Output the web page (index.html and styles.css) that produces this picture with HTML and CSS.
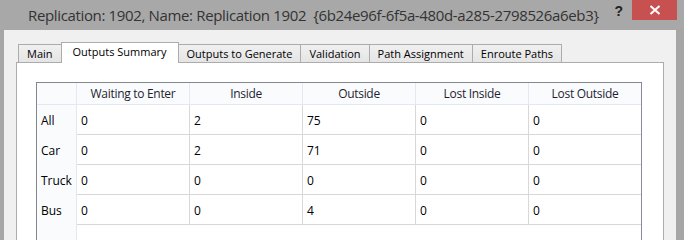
FILE: index.html
```html
<!doctype html>
<html lang="en">
  <head>
    <meta charset="UTF-8" />
    <title>Replication 1902</title>
    <link rel="stylesheet" href="styles.css">
  </head>
  <body>
    <div class="window">
      <div class="titlebar">
        <span class="title">Replication: 1902, Name: Replication 1902&nbsp;&nbsp;{6b24e96f-6f5a-480d-a285-2798526a6eb3}</span>
        <span class="help">?</span>
        <span class="close">
          <svg width="12" height="10" viewBox="0 0 12 10">
            <path d="M1.5 1 L10.5 9 M10.5 1 L1.5 9" stroke="#fff" stroke-width="2" fill="none" />
          </svg>
        </span>
      </div>

      <div class="client">
        <div class="tabs">
          <div class="tab">Main</div>
          <div class="tab active">Outputs Summary</div>
          <div class="tab">Outputs to Generate</div>
          <div class="tab">Validation</div>
          <div class="tab">Path Assignment</div>
          <div class="tab">Enroute Paths</div>
        </div>

        <div class="panel">
          <div class="grid">
            <div class="row head">
              <div class="rh"></div>
              <div class="cell">Waiting to Enter</div>
              <div class="cell">Inside</div>
              <div class="cell">Outside</div>
              <div class="cell">Lost Inside</div>
              <div class="cell">Lost Outside</div>
            </div>
            <div class="row">
              <div class="rh">All</div>
              <div class="cell">0</div>
              <div class="cell">2</div>
              <div class="cell">75</div>
              <div class="cell">0</div>
              <div class="cell">0</div>
            </div>
            <div class="row">
              <div class="rh">Car</div>
              <div class="cell">0</div>
              <div class="cell">2</div>
              <div class="cell">71</div>
              <div class="cell">0</div>
              <div class="cell">0</div>
            </div>
            <div class="row">
              <div class="rh">Truck</div>
              <div class="cell">0</div>
              <div class="cell">0</div>
              <div class="cell">0</div>
              <div class="cell">0</div>
              <div class="cell">0</div>
            </div>
            <div class="row">
              <div class="rh">Bus</div>
              <div class="cell">0</div>
              <div class="cell">0</div>
              <div class="cell">4</div>
              <div class="cell">0</div>
              <div class="cell">0</div>
            </div>
            <div class="row filler">
              <div class="rh"></div>
            </div>
          </div>
        </div>
      </div>
    </div>
  </body>
</html>
```

FILE: styles.css
```css
body {
  margin: 0;
  background: #a6a6a6;
  font-family: "Open Sans", "Noto Sans", sans-serif;
  overflow: hidden;
}
.window {
  height: 240px;
  display: flex;
  flex-direction: column;
}
.titlebar {
  height: 30px;
  display: flex;
  align-items: flex-start;
  background: #a8a8a8;
  color: #333;
}
.title {
  font-size: 15px;
  padding: 5px 0 0 28px;
  flex: 1;
  white-space: nowrap;
  letter-spacing: -0.35px;
}
.help {
  font-family: "Liberation Sans", sans-serif;
  font-weight: bold;
  font-size: 14px;
  color: #222;
  padding-top: 3px;
  margin-right: 9px;
}
.close {
  width: 45px;
  height: 20px;
  margin-right: 7px;
  background: #c75050;
  display: flex;
  align-items: center;
  justify-content: center;
}
.client {
  flex: 1;
  margin: 0 8px 0 4px;
  background: #f0f0f0;
  padding: 12px 12px 0 12px;
  display: flex;
  flex-direction: column;
}
.tabs {
  display: flex;
  align-items: flex-end;
  padding-left: 2px;
  height: 20px;
  font-size: 11px;
}
.tab {
  height: 18px;
  line-height: 17px;
  padding: 0 8px;
  border: 1px solid #acacac;
  border-bottom: none;
  border-left: none;
  background: linear-gradient(#f0f0f0, #e5e5e5);
  color: #000;
  box-sizing: border-box;
  white-space: nowrap;
}
.tab:first-child {
  border-left: 1px solid #acacac;
}
.tab.active {
  height: 21px;
  margin-bottom: -1px;
  background: #fff;
  border-left: 1px solid #acacac;
  margin-left: -1px;
  padding: 0 11px;
  position: relative;
  line-height: 18px;
}
.tab.active + .tab {
  border-left: none;
}
.panel {
  flex: 1;
  background: #fff;
  border: 1px solid #acacac;
  border-bottom: none;
  padding: 19px 20px 0 19px;
  display: flex;
  flex-direction: column;
}
.grid {
  flex: 1;
  width: 606px;
  border-left: 1px solid #828790;
  border-top: 1px solid #828790;
  border-right: 1px solid #8a8a9c;
  box-sizing: border-box;
  display: flex;
  flex-direction: column;
  font-size: 12px;
  color: #000;
}
.row {
  display: flex;
  height: 30px;
}
.row.head {
  height: 22px;
  background: #fafbfd;
  color: #1e1e32;
  letter-spacing: -0.3px;
}
.rh {
  width: 40px;
  flex: none;
  box-sizing: border-box;
  background: #fafbfd;
  border-right: 1px solid #e2e9f5;
  padding: 7px 0 0 4px;
}
.row.head .rh {
  border-bottom: 1px solid #e2e9f5;
}
.cell {
  width: 113px;
  flex: none;
  box-sizing: border-box;
  border-right: 1px solid #d8d8d8;
  border-bottom: 1px solid #d8d8d8;
  padding: 7px 0 0 4px;
  white-space: nowrap;
}
.cell:last-child {
  border-right: none;
  width: 112px;
}
.row.head .cell {
  text-align: center;
  padding: 2px 0 0 0;
  border-right: 1px solid #e2e9f5;
  border-bottom: 1px solid #e2e9f5;
}
.row.head .cell:last-child {
  border-right: none;
}
.row.filler {
  flex: 1;
}
```
